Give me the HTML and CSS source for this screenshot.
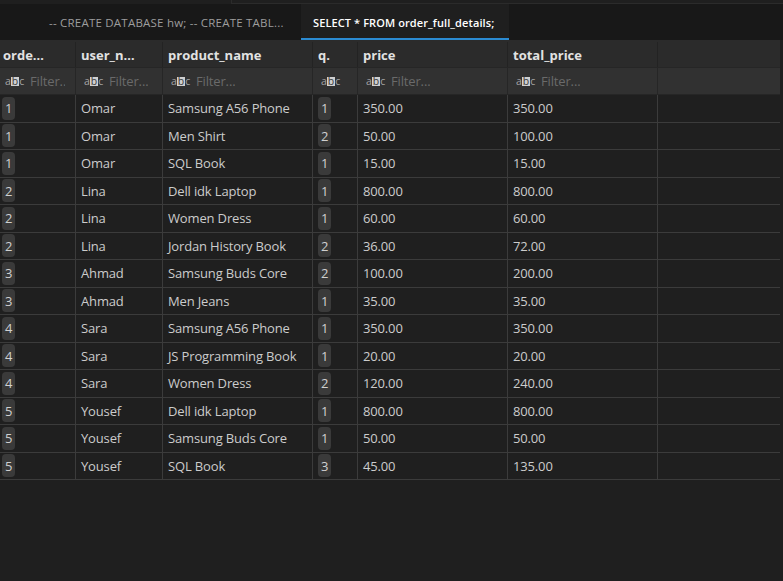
FILE: index.html
```html
<!DOCTYPE html>
<html>
<head>
<meta charset="utf-8">
<link rel="stylesheet" href="styles.css">
</head>
<body>
<div class="topstrip"><div class="topbox"></div></div>
<div class="tabbar">
  <div class="tab">-- CREATE DATABASE hw; -- CREATE TABL...</div>
  <div class="tab active">SELECT * FROM order_full_details;</div>
</div>
<div class="grid" id="grid">
  <div class="row head">
    <div class="c c1"><span class="ht">order_id</span></div>
    <div class="c c2"><span class="ht">user_name</span></div>
    <div class="c c3"><span class="ht">product_name</span></div>
    <div class="c c4"><span class="ht">q.</span></div>
    <div class="c c5"><span class="ht">price</span></div>
    <div class="c c6"><span class="ht">total_price</span></div>
    <div class="c c7"></div>
  </div>
  <div class="row filter">
    <div class="c c1"><span class="abc">a<b>b</b>c</span><span class="ph">Filter..</span></div>
    <div class="c c2"><span class="abc">a<b>b</b>c</span><span class="ph">Filter...</span></div>
    <div class="c c3"><span class="abc">a<b>b</b>c</span><span class="ph">Filter...</span></div>
    <div class="c c4"><span class="abc">a<b>b</b>c</span><span class="ph">Filter...</span></div>
    <div class="c c5"><span class="abc">a<b>b</b>c</span><span class="ph">Filter...</span></div>
    <div class="c c6"><span class="abc">a<b>b</b>c</span><span class="ph">Filter...</span></div>
    <div class="c c7"></div>
  </div>
</div>
<script src="app.js"></script>
</body>
</html>
```
FILE: app.js
```js
const data = [
  [1,"Omar","Samsung A56 Phone",1,"350.00","350.00"],
  [1,"Omar","Men Shirt",2,"50.00","100.00"],
  [1,"Omar","SQL Book",1,"15.00","15.00"],
  [2,"Lina","Dell idk Laptop",1,"800.00","800.00"],
  [2,"Lina","Women Dress",1,"60.00","60.00"],
  [2,"Lina","Jordan History Book",2,"36.00","72.00"],
  [3,"Ahmad","Samsung Buds Core",2,"100.00","200.00"],
  [3,"Ahmad","Men Jeans",1,"35.00","35.00"],
  [4,"Sara","Samsung A56 Phone",1,"350.00","350.00"],
  [4,"Sara","JS Programming Book",1,"20.00","20.00"],
  [4,"Sara","Women Dress",2,"120.00","240.00"],
  [5,"Yousef","Dell idk Laptop",1,"800.00","800.00"],
  [5,"Yousef","Samsung Buds Core",1,"50.00","50.00"],
  [5,"Yousef","SQL Book",3,"45.00","135.00"]
];
const grid = document.getElementById("grid");
for (const r of data) {
  const row = document.createElement("div");
  row.className = "row data";
  row.innerHTML =
    `<div class="c c1"><span class="badge">${r[0]}</span></div>` +
    `<div class="c c2">${r[1]}</div>` +
    `<div class="c c3">${r[2]}</div>` +
    `<div class="c c4"><span class="badge">${r[3]}</span></div>` +
    `<div class="c c5">${r[4]}</div>` +
    `<div class="c c6">${r[5]}</div>` +
    `<div class="c c7"></div>`;
  grid.appendChild(row);
}
```
FILE: styles.css
```css
html, body {
  margin: 0;
  padding: 0;
  background: #1f1f1f;
  font-family: "Open Sans", "Noto Sans", sans-serif;
  width: 783px;
  height: 581px;
  overflow: hidden;
}
.topstrip {
  height: 4px;
  background: #1f1f1f;
  display: flex;
  justify-content: flex-end;
}
.topbox {
  width: 551px;
  height: 3px;
  border-left: 1px solid #2b2b2b;
  border-bottom: 1px solid #2b2b2b;
}
.tabbar {
  height: 36px;
  background: #181818;
  display: flex;
  padding-left: 35px;
}
.tab {
  height: 36px;
  box-sizing: border-box;
  padding: 0 0 0 14px;
  display: flex;
  align-items: center;
  font-size: 11.5px;
  color: #9d9d9d;
  white-space: nowrap;
  width: 266px;
  letter-spacing: 0.22px;
}
.tab.active {
  background: #1f1f1f;
  color: #ffffff;
  font-weight: 600;
  font-size: 11px;
  letter-spacing: 0.1px;
  width: 208px;
  padding-left: 12px;
  border-bottom: 2px solid #2b8bd2;
  padding-top: 2px;
}
.grid {
  display: flex;
  flex-direction: column;
  width: 780px;
}
.row {
  display: flex;
  height: 27.5px;
  box-sizing: border-box;
}
.c {
  box-sizing: border-box;
  border-right: 1px solid #3b3b3b;
  display: flex;
  align-items: center;
  padding-left: 5px;
  overflow: hidden;
  white-space: nowrap;
  font-size: 13px;
  letter-spacing: -0.15px;
  color: #cccccc;
}
.c1 { width: 76px; padding-left: 3px; }
.c2 { width: 87px; }
.c3 { width: 150px; }
.c4 { width: 45px; }
.c5 { width: 150px; }
.c6 { width: 150px; }
.c7 { flex: 1; border-right: none; }
.head {
  background: #2b2b2b;
  height: 27px;
  padding-top: 2px;
}
.head .c {
  border-right-color: #232323;
  font-weight: 700;
  color: #e2e2e2;
  letter-spacing: 0;
}
.ht {
  overflow: hidden;
  text-overflow: ellipsis;
  padding-right: 2px;
}
.c1 .ht { max-width: 45px; }
.c2 .ht { max-width: 58px; }
.filter {
  background: #313131;
  height: 28px;
  border-top: 1px solid #262626;
  border-bottom: 1px solid #262626;
}
.filter .c {
  border-right-color: #262626;
  padding-left: 8px;
  padding-right: 10px;
}
.filter .c1 { padding-left: 5px; }
.filter .c4 { padding-right: 12px; }
.filter .c4 .abc { width: auto; margin-right: 5px; }
.filter .c7 { padding: 0; }
.abc {
  font-size: 10.5px;
  color: #a4a4a4;
  display: inline-flex;
  align-items: center;
  width: 25px;
  flex: none;
  letter-spacing: 0;
}
.abc b {
  font-weight: 400;
  background: #cfcfcf;
  color: #3a3a3a;
  padding: 0 0.5px;
  line-height: 9px;
  height: 9px;
  display: inline-block;
  margin: 0 0.5px;
}
.ph {
  color: #6a6a6a;
  font-size: 13px;
  overflow: hidden;
  min-width: 0;
  flex: 0 1 auto;
}
.data {
  background: #1f1f1f;
  border-bottom: 1px solid #3b3b3b;
}
.data .c { padding-left: 5px; }
.data .c1 { padding-left: 2px; }
.badge {
  background: #3a3a3a;
  border-radius: 4px;
  height: 23px;
  display: inline-flex;
  align-items: center;
  padding: 0 3px;
  color: #d0d0d0;
  font-size: 13px;
}
```
